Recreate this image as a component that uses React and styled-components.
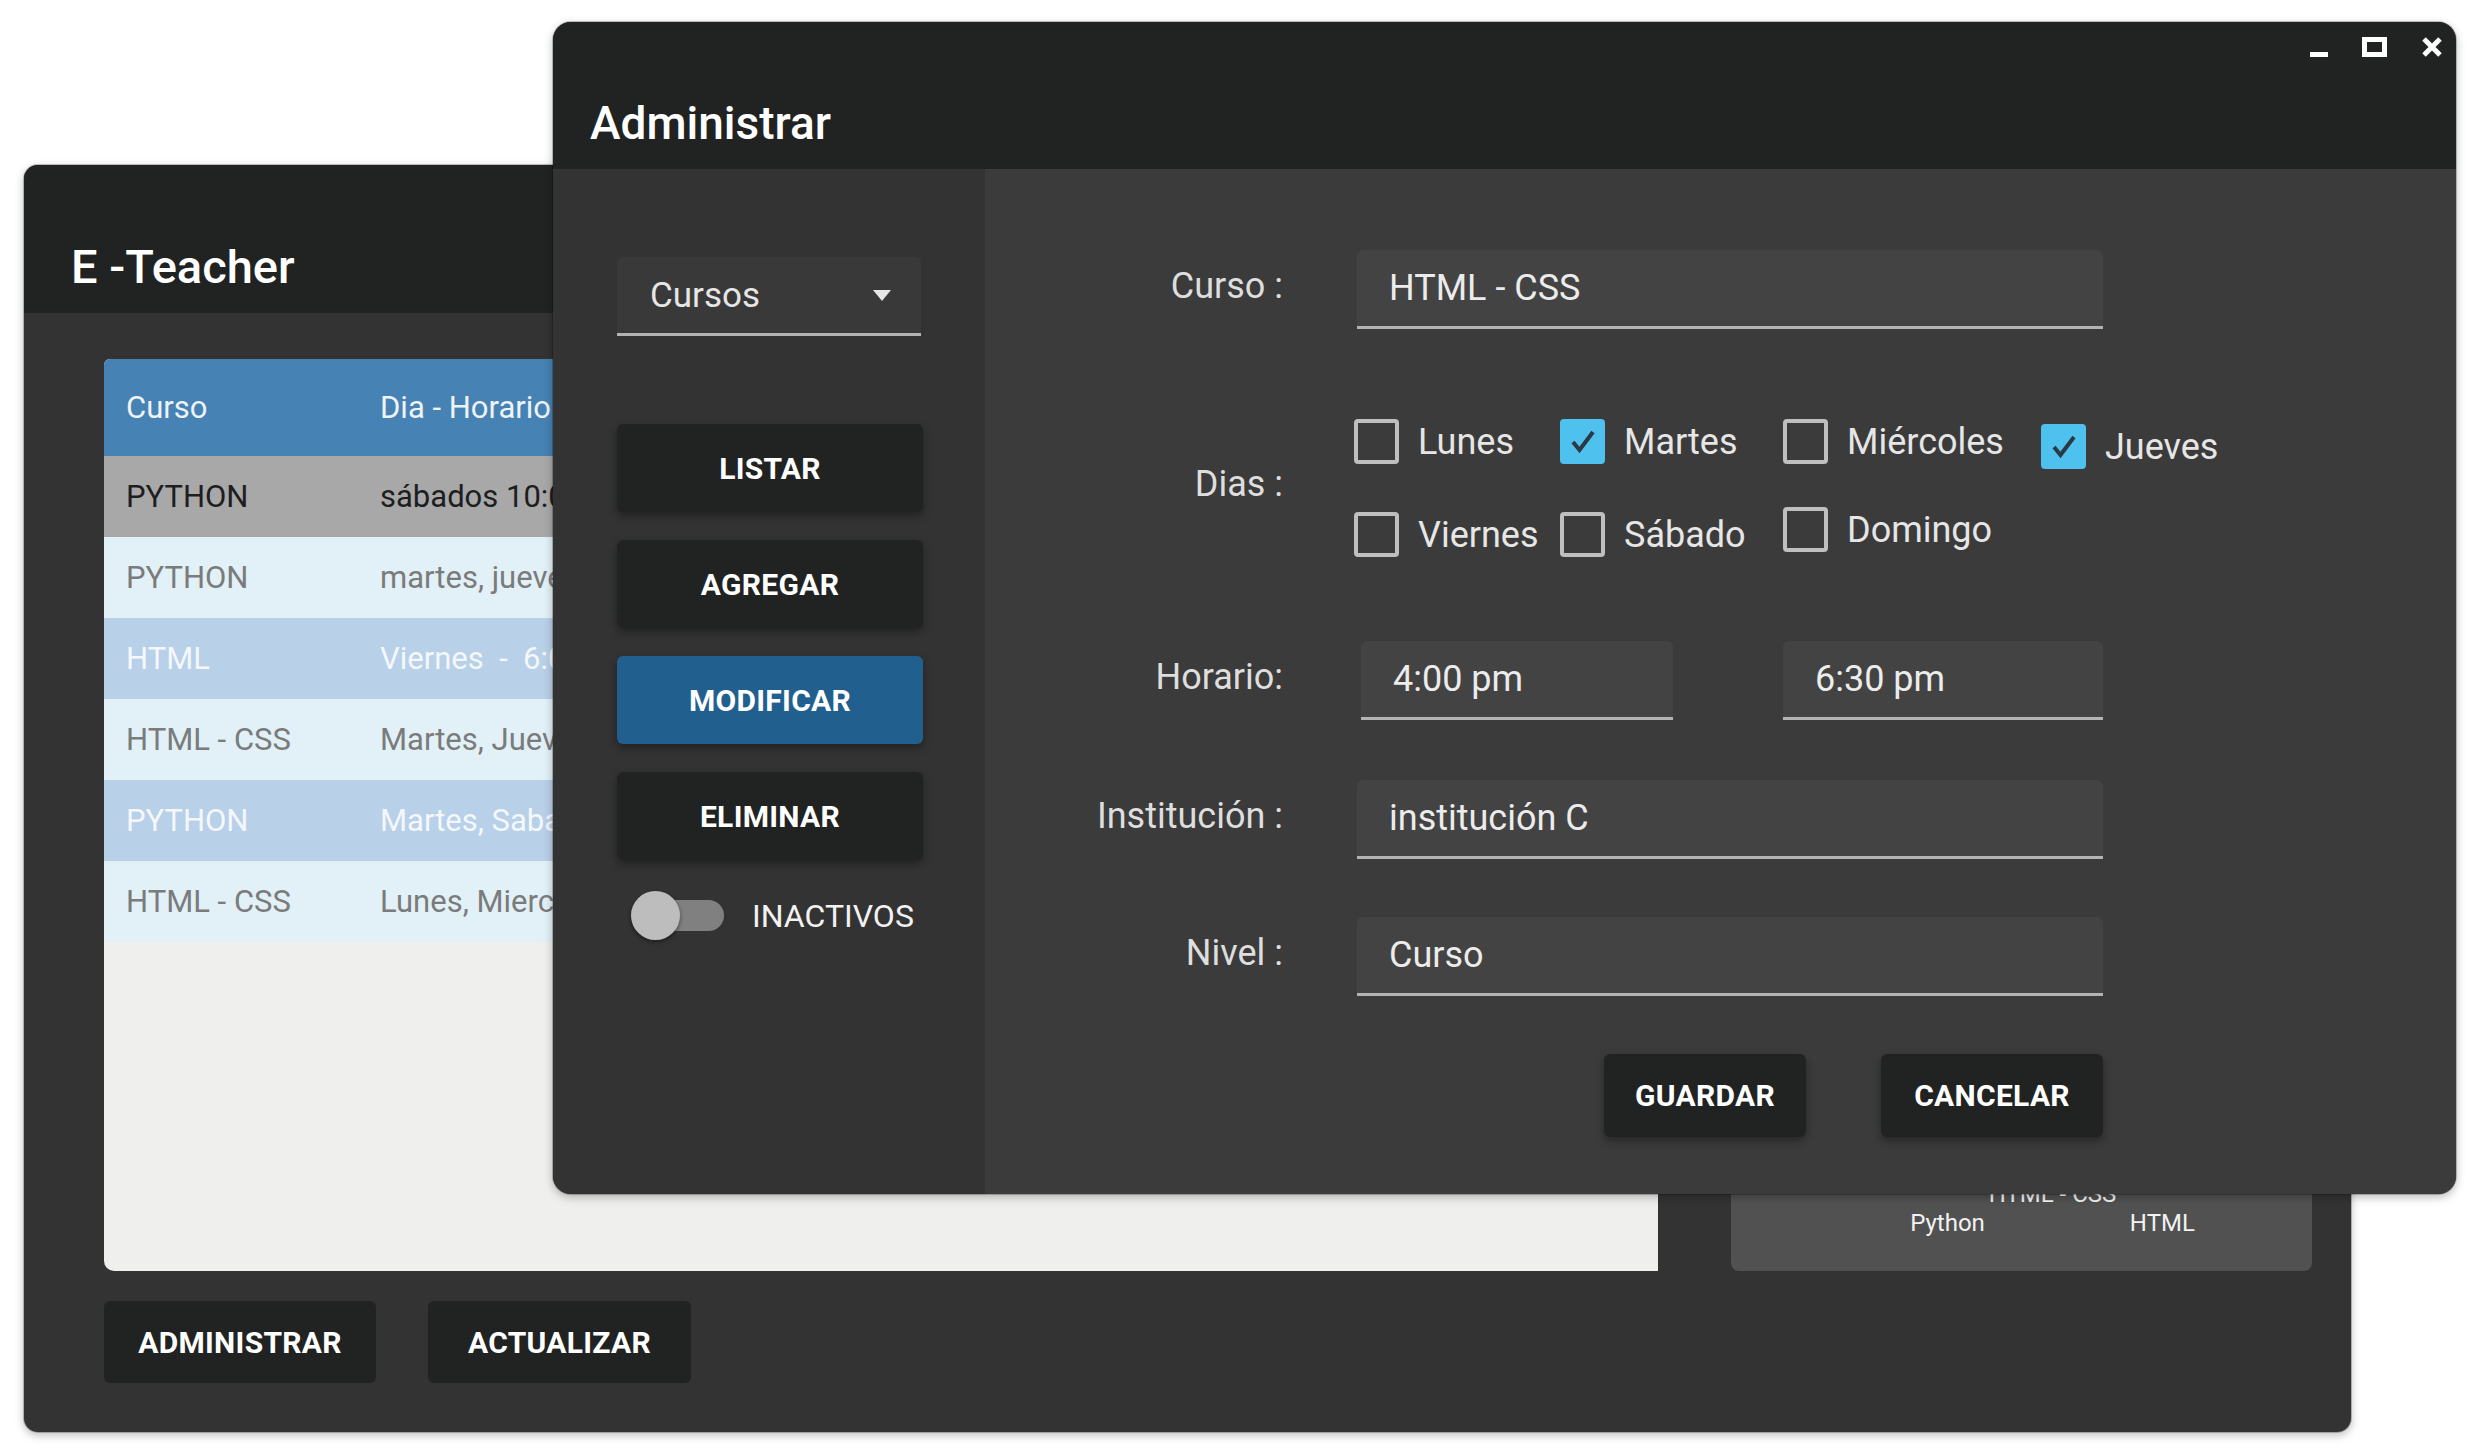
import React from "react";
import styled, { createGlobalStyle } from "styled-components";

const GlobalStyle = createGlobalStyle`
  html, body { margin: 0; padding: 0; background: #ffffff; }
  body { font-family: Roboto, "Liberation Sans", Arial, sans-serif; }
  *, *::before, *::after { box-sizing: border-box; }
`;

const Desktop = styled.div`
  position: relative;
  width: 2481px;
  height: 1454px;
  overflow: hidden;
  background: #ffffff;
`;

const Window = styled.section`
  position: absolute;
  left: ${(p) => p.$x}px;
  top: ${(p) => p.$y}px;
  width: ${(p) => p.$w}px;
  height: ${(p) => p.$h}px;
  border-radius: ${(p) => p.$r}px;
  overflow: hidden;
  display: flex;
  flex-direction: column;
  background: #333333;
  box-shadow: 0 0 0 1px rgba(0, 0, 0, 0.22), 0 3px 10px rgba(0, 0, 0, 0.28);
`;

const TitleBar = styled.header`
  flex: 0 0 ${(p) => p.$h}px;
  background: #212322;
  display: flex;
  justify-content: space-between;
  align-items: flex-start;
  padding: 0 13px 0 ${(p) => p.$pl}px;
`;

const WindowTitle = styled.h1`
  margin: ${(p) => p.$mt}px 0 0;
  font-size: ${(p) => p.$fs}px;
  line-height: 46px;
  font-weight: 500;
  color: #ffffff;
  white-space: pre;
`;

const Controls = styled.div`
  margin-top: 15px;
  display: flex;
  align-items: flex-start;
  gap: 34px;
  svg { display: block; }
`;

/* ---------- Main window ---------- */

const MainBody = styled.div`
  flex: 1;
  display: grid;
  grid-template-columns: 1554px 581px;
  grid-template-rows: 912px 82px;
  column-gap: 73px;
  row-gap: 30px;
  padding: 46px 0 0 80px;
`;

const Table = styled.div`
  background: #efefed;
  border-radius: 6px 0 0 10px;
  overflow: hidden;
  display: flex;
  flex-direction: column;
`;

const toneBg = {
  head: "#4682b4",
  sel: "#a7a8a7",
  light: "#e1f1f7",
  blue: "#b8d0e8",
};
const toneFg = {
  head: "#eef3f8",
  sel: "#1e1e1e",
  light: "#7b7b7b",
  blue: "#f4f7fb",
};

const TRow = styled.div`
  display: grid;
  grid-template-columns: 254px 460px 330px 260px 1fr;
  height: ${(p) => (p.$tone === "head" ? 97 : 81)}px;
  align-items: center;
  background: ${(p) => toneBg[p.$tone]};
  color: ${(p) => toneFg[p.$tone]};
  font-size: 31px;
`;

const TCell = styled.div`
  padding-left: 22px;
  white-space: pre;
  overflow: hidden;
`;

const ChartPanel = styled.div`
  background: #515151;
  border-radius: 8px;
  display: flex;
  flex-direction: column;
  justify-content: space-between;
  overflow: hidden;
`;

const ChartArea = styled.div`
  flex: 1;
  padding: 40px 40px 20px;
  svg { display: block; width: 100%; height: 100%; }
`;

const Legend = styled.div`
  display: flex;
  flex-direction: column;
  align-items: center;
  padding: 0 0 33px 62px;
  color: #f2f2f2;
  font-size: 24px;
  line-height: 29px;
`;

const LegendRow = styled.div`
  display: flex;
  gap: 145px;
`;

const BottomBar = styled.div`
  grid-column: 1 / -1;
  display: flex;
  gap: 52px;
`;

const DarkButton = styled.button`
  width: ${(p) => p.$w}px;
  height: ${(p) => p.$h}px;
  border: none;
  border-radius: 6px;
  background: ${(p) => (p.$primary ? "#215f8f" : "#212322")};
  color: #ffffff;
  font-family: Roboto, "Liberation Sans", Arial, sans-serif;
  font-size: 30px;
  font-weight: 700;
  letter-spacing: 0.3px;
  padding: 0;
  cursor: pointer;
  box-shadow: ${(p) => (p.$flat ? "none" : "0 4px 8px rgba(0,0,0,0.35)")};
`;

/* ---------- Admin window ---------- */

const AdminBody = styled.div`
  flex: 1;
  display: flex;
`;

const SidePanel = styled.aside`
  flex: 0 0 432px;
  background: #333333;
  display: flex;
  flex-direction: column;
  align-items: flex-start;
  padding: 88px 0 0 64px;
`;

const Select = styled.div`
  width: 304px;
  height: 79px;
  background: #393939;
  border-bottom: 3px solid #b3b3b3;
  border-radius: 6px 6px 0 0;
  display: flex;
  align-items: center;
  justify-content: space-between;
  padding: 0 30px 0 33px;
  color: #e6e6e6;
  font-size: 35px;
  svg { display: block; }
`;

const SideButtons = styled.div`
  margin-top: 88px;
  display: flex;
  flex-direction: column;
  gap: 28px;
`;

const ToggleRow = styled.div`
  margin: 30px 0 0 14px;
  display: flex;
  align-items: center;
  gap: 28px;
`;

const Toggle = styled.div`
  position: relative;
  width: 93px;
  height: 51px;
`;

const Track = styled.span`
  position: absolute;
  left: 9px;
  top: 10px;
  width: 84px;
  height: 31px;
  border-radius: 16px;
  background: #808080;
`;

const Knob = styled.span`
  position: absolute;
  left: 0;
  top: 1px;
  width: 49px;
  height: 49px;
  border-radius: 50%;
  background: #bdbdbd;
  box-shadow: 0 2px 4px rgba(0, 0, 0, 0.45);
`;

const ToggleLabel = styled.span`
  color: #f2f2f2;
  font-size: 32px;
  font-weight: 400;
`;

const FormPanel = styled.div`
  flex: 1;
  background: #3b3b3b;
  display: flex;
  flex-direction: column;
  padding-top: 81px;
`;

const FormRow = styled.div`
  margin-top: ${(p) => p.$mt || 0}px;
  display: grid;
  grid-template-columns: 298px 746px;
  column-gap: 74px;
  align-items: center;
`;

const Label = styled.label`
  text-align: right;
  font-size: 36px;
  line-height: 1;
  color: #dedede;
  padding-bottom: 8px;
  white-space: pre;
`;

const Field = styled.div`
  height: 79px;
  background: #434343;
  border-bottom: 3px solid #b3b3b3;
  border-radius: 6px 6px 0 0;
  display: flex;
  align-items: center;
  padding-left: 32px;
  color: #ececec;
  font-size: 36px;
`;

const TimeGroup = styled.div`
  display: grid;
  grid-template-columns: 312px 320px;
  justify-content: space-between;
  padding-left: 4px;
`;

const DayGrid = styled.div`
  display: grid;
  grid-template-columns: 206px 223px 258px auto;
  grid-template-rows: 45px 45px;
  row-gap: 48px;
  margin-left: -3px;
`;

const DayItem = styled.div`
  display: flex;
  align-items: center;
  gap: 19px;
  height: 45px;
  margin-top: ${(p) => p.$shift || 0}px;
  color: #e6e6e6;
  font-size: 36px;
  white-space: nowrap;
`;

const Box = styled.span`
  flex: 0 0 45px;
  width: 45px;
  height: 45px;
  border-radius: 4px;
  border: 4px solid ${(p) => (p.$on ? "#4fc1ef" : "#bfbfbf")};
  background: ${(p) => (p.$on ? "#4fc1ef" : "transparent")};
  display: flex;
  align-items: center;
  justify-content: center;
  svg { display: block; }
`;

const FormActions = styled.div`
  grid-column: 2;
  display: flex;
  justify-content: flex-end;
  gap: 75px;
`;

const Check = () => (
  <svg width="26" height="23" viewBox="0 0 26 23">
    <polyline points="3,12 9.5,20 23,2" fill="none" stroke="#2b3a42" strokeWidth="4" />
  </svg>
);

const Day = ({ name, on, shift }) => (
  <DayItem $shift={shift}>
    <Box $on={on}>{on && <Check />}</Box>
    {name}
  </DayItem>
);

const rows = [
  ["sel", "PYTHON", "sábados 10:00 am a 1:00 pm", "institución A", "Curso", "Activo"],
  ["light", "PYTHON", "martes, jueves 7:00 pm a 9:00 pm", "institución B", "Taller", "Activo"],
  ["blue", "HTML", "Viernes  -  6:00 pm a 8:00 pm", "institución A", "Curso", "Activo"],
  ["light", "HTML - CSS", "Martes, Jueves 4:00 pm a 6:30 pm", "institución C", "Curso", "Activo"],
  ["blue", "PYTHON", "Martes, Sabado 5:00 pm a 7:00 pm", "institución B", "Taller", "Activo"],
  ["light", "HTML - CSS", "Lunes, Miercoles 3:00 pm a 5:00 pm", "institución C", "Curso", "Activo"],
];

export default function App() {
  return (
    <>
      <GlobalStyle />
      <Desktop>
        <Window $x={24} $y={165} $w={2327} $h={1267} $r={14}>
          <TitleBar $h={148} $pl={47}>
            <WindowTitle $mt={79} $fs={47}>E -Teacher</WindowTitle>
          </TitleBar>
          <MainBody>
            <Table>
              <TRow $tone="head">
                <TCell>Curso</TCell>
                <TCell>Dia - Horario</TCell>
                <TCell>Institución</TCell>
                <TCell>Nivel</TCell>
                <TCell>Estado</TCell>
              </TRow>
              {rows.map(([tone, ...cells], i) => (
                <TRow key={i} $tone={tone}>
                  {cells.map((c, j) => (
                    <TCell key={j}>{c}</TCell>
                  ))}
                </TRow>
              ))}
            </Table>
            <ChartPanel>
              <ChartArea>
                <svg viewBox="0 0 500 600" preserveAspectRatio="none">
                  <rect x="60" y="200" width="90" height="380" fill="#4fc1ef" />
                  <rect x="205" y="320" width="90" height="260" fill="#4682b4" />
                  <rect x="350" y="120" width="90" height="460" fill="#b8d0e8" />
                </svg>
              </ChartArea>
              <Legend>
                <LegendRow>
                  <span>HTML - CSS</span>
                </LegendRow>
                <LegendRow>
                  <span>Python</span>
                  <span>HTML</span>
                </LegendRow>
              </Legend>
            </ChartPanel>
            <BottomBar>
              <DarkButton $w={272} $h={82} $flat>ADMINISTRAR</DarkButton>
              <DarkButton $w={263} $h={82} $flat>ACTUALIZAR</DarkButton>
            </BottomBar>
          </MainBody>
        </Window>

        <Window $x={553} $y={22} $w={1903} $h={1172} $r={18}>
          <TitleBar $h={147} $pl={37}>
            <WindowTitle $mt={78} $fs={46}>Administrar</WindowTitle>
            <Controls>
              <svg width="18" height="20" viewBox="0 0 18 20">
                <rect x="0" y="15" width="18" height="5" fill="#ffffff" />
              </svg>
              <svg width="25" height="20" viewBox="0 0 25 20">
                <rect x="2.5" y="2.5" width="20" height="15" fill="none" stroke="#ffffff" strokeWidth="5" />
              </svg>
              <svg width="22" height="20" viewBox="0 0 22 20">
                <path d="M3 2 L19 18 M19 2 L3 18" stroke="#ffffff" strokeWidth="5" />
              </svg>
            </Controls>
          </TitleBar>
          <AdminBody>
            <SidePanel>
              <Select>
                <span>Cursos</span>
                <svg width="18" height="11" viewBox="0 0 18 11">
                  <polygon points="0,0 18,0 9,11" fill="#e6e6e6" />
                </svg>
              </Select>
              <SideButtons>
                <DarkButton $w={306} $h={88}>LISTAR</DarkButton>
                <DarkButton $w={306} $h={88}>AGREGAR</DarkButton>
                <DarkButton $w={306} $h={88} $primary>MODIFICAR</DarkButton>
                <DarkButton $w={306} $h={88}>ELIMINAR</DarkButton>
              </SideButtons>
              <ToggleRow>
                <Toggle>
                  <Track />
                  <Knob />
                </Toggle>
                <ToggleLabel>INACTIVOS</ToggleLabel>
              </ToggleRow>
            </SidePanel>
            <FormPanel>
              <FormRow>
                <Label>Curso :</Label>
                <Field>HTML - CSS</Field>
              </FormRow>
              <FormRow $mt={90}>
                <Label>Dias :</Label>
                <DayGrid>
                  <Day name="Lunes" />
                  <Day name="Martes" on />
                  <Day name="Miércoles" />
                  <Day name="Jueves" on shift={5} />
                  <Day name="Viernes" />
                  <Day name="Sábado" />
                  <Day name="Domingo" shift={-5} />
                </DayGrid>
              </FormRow>
              <FormRow $mt={84}>
                <Label>Horario:</Label>
                <TimeGroup>
                  <Field>4:00 pm</Field>
                  <Field>6:30 pm</Field>
                </TimeGroup>
              </FormRow>
              <FormRow $mt={60}>
                <Label>Institución :</Label>
                <Field>institución C</Field>
              </FormRow>
              <FormRow $mt={58}>
                <Label>Nivel :</Label>
                <Field>Curso</Field>
              </FormRow>
              <FormRow $mt={58}>
                <FormActions>
                  <DarkButton $w={202} $h={83}>GUARDAR</DarkButton>
                  <DarkButton $w={222} $h={83}>CANCELAR</DarkButton>
                </FormActions>
              </FormRow>
            </FormPanel>
          </AdminBody>
        </Window>
      </Desktop>
    </>
  );
}
